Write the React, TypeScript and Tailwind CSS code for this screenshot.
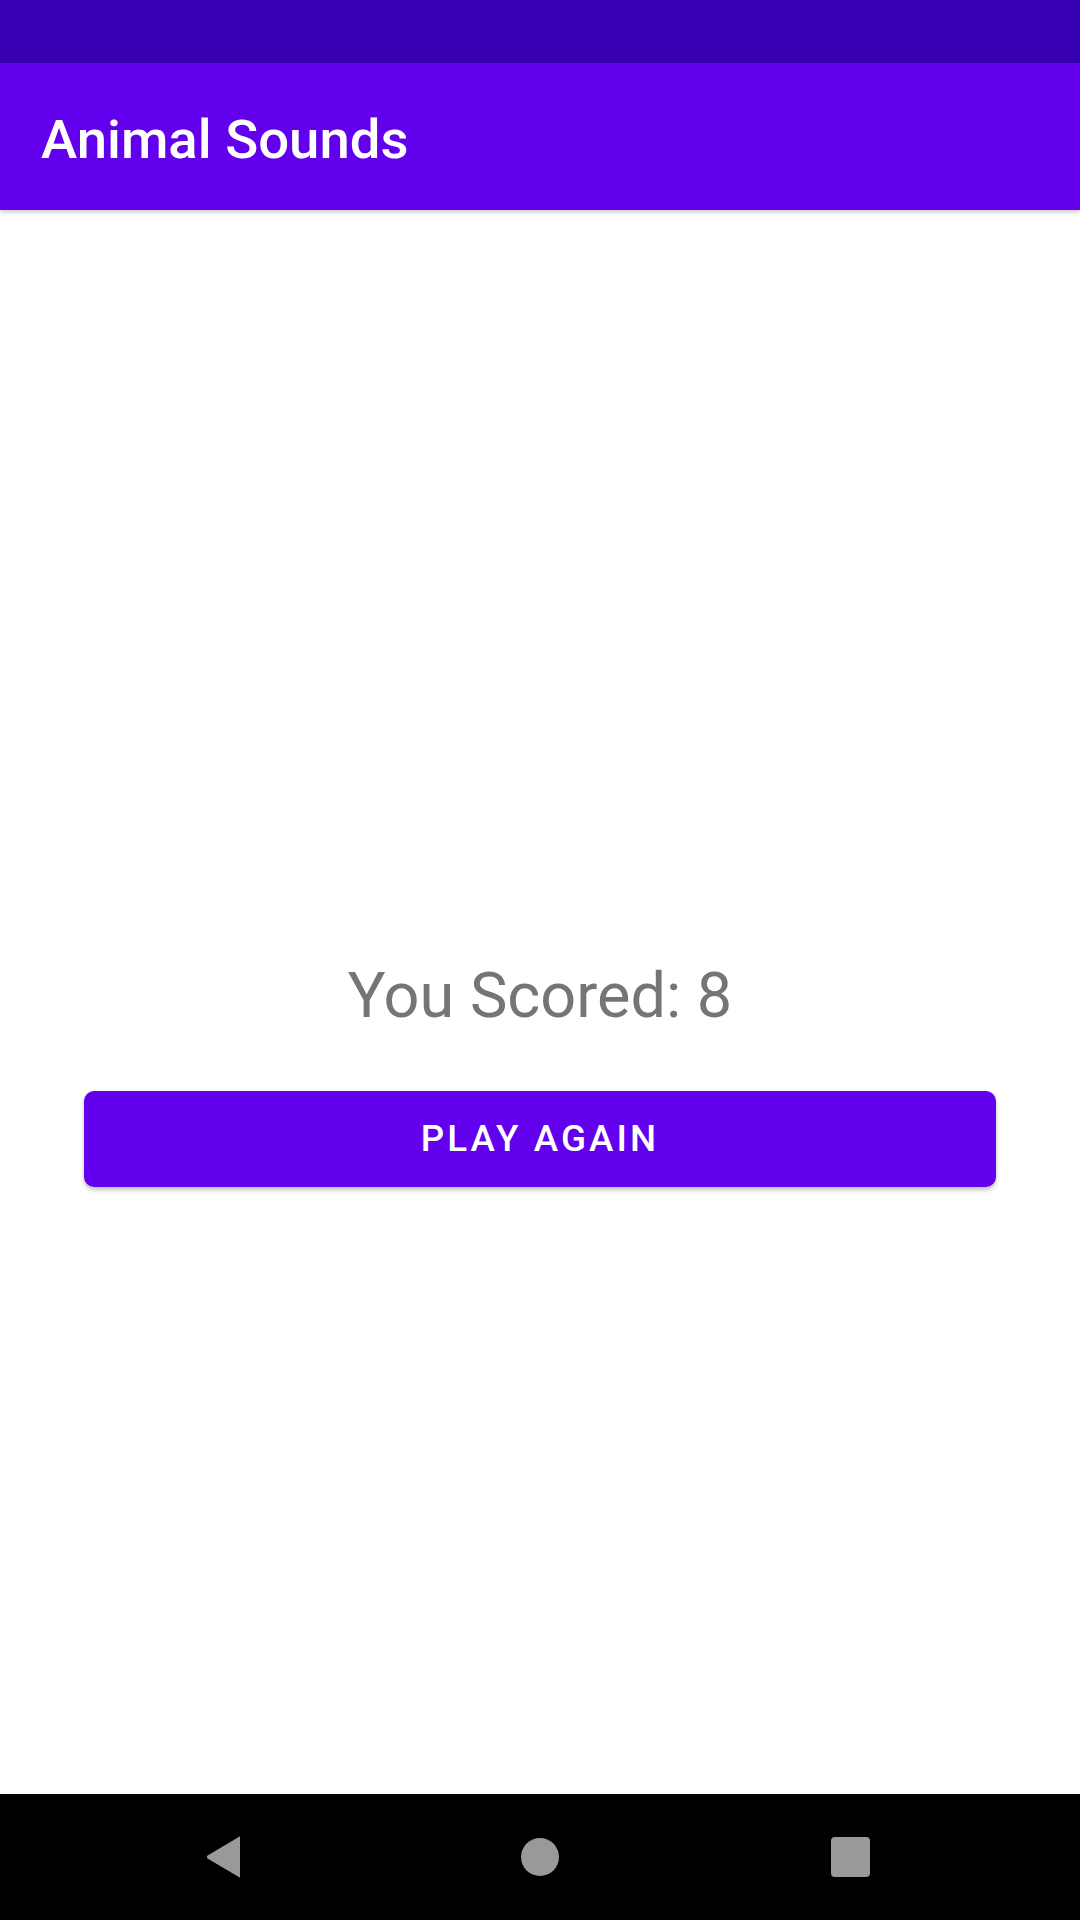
const App = () => {
  return (
    <div className="flex h-[1920px] w-[1080px] flex-col bg-white font-['Roboto',sans-serif]">
      {/* status bar */}
      <div className="h-[63px] w-full shrink-0 bg-[#3700b3]" />

      {/* toolbar */}
      <div className="relative z-10 flex h-[147px] shrink-0 items-center bg-[#6200ee] px-[41px] pt-[6px] shadow-[0_2px_5px_rgba(0,0,0,0.22)]">
        <h1 className="text-[54.5px] font-medium leading-[61px] text-white">
          Animal Sounds
        </h1>
      </div>

      {/* content */}
      <main className="flex flex-1 flex-col items-center px-[84px] pt-[749px]">
        <p className="text-[63px] leading-[74px] text-[#757575]">You Scored: 8</p>
        <button className="mt-[58px] flex h-[96px] w-full items-center justify-center rounded-[10px] bg-[#6200ee] text-[36.75px] font-medium tracking-[3.1px] text-white shadow-[0_3px_4px_rgba(0,0,0,0.25)]">
          PLAY AGAIN
        </button>
      </main>

      {/* navigation bar */}
      <div className="flex h-[126px] shrink-0 items-center bg-black">
        <div className="flex w-full items-center">
          <div className="flex w-[521px] justify-end pr-[279px]">
            <svg width="36" height="42" viewBox="0 0 36 42">
              <path d="M34 1 L34 41 Q33 42 32 40.5 L1.5 22.5 Q0 21 1.5 19.5 L32 1.5 Q33 0 34 1 Z" fill="#999999" />
            </svg>
          </div>
          <div className="h-[38px] w-[38px] rounded-full bg-[#999999]" />
          <div className="flex flex-1 pl-[272px]">
            <div className="h-[40px] w-[39px] rounded-[4px] bg-[#999999]" />
          </div>
        </div>
      </div>
    </div>
  );
};

export default App;
